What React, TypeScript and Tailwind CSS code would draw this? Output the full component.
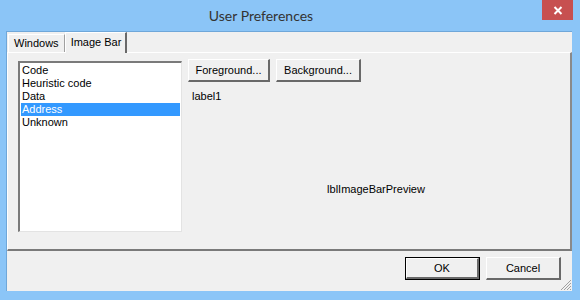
import React from 'react';

const items = ['Code', 'Heuristic code', 'Data', 'Address', 'Unknown'];

const ClassicButton: React.FC<{ label: string; width: string; isDefault?: boolean }> = ({ label, width, isDefault }) => {
  return (
    <div className={`${width} h-[23px] ${isDefault ? 'border border-black' : ''}`}>
      <div className="w-full h-full border-t border-l border-white border-r-2 border-b-2 border-r-[#696969] border-b-[#696969] bg-[#f0f0f0] flex items-center justify-center text-[11px] text-black whitespace-nowrap">
        {label}
      </div>
    </div>
  );
};

const App: React.FC = () => {
  return (
    <div className="w-[580px] h-[300px] bg-[#8bc5f7] flex flex-col" style={{ fontFamily: '"Liberation Sans", Arial, sans-serif' }}>
      {/* Title bar */}
      <div className="h-[31px] relative flex items-center justify-center">
        <span className="text-[14px] text-[#333] pr-[58px] pb-[1px]" style={{ fontFamily: 'Lato, "Noto Sans", sans-serif' }}>
          User Preferences
        </span>
        <div className="absolute top-0 right-[7px] w-[31px] h-[20px] bg-[#c75050] flex items-center justify-center">
          <svg width="10" height="9" viewBox="0 0 10 9">
            <path d="M1.5 1 L8.5 8 M8.5 1 L1.5 8" stroke="white" strokeWidth="2" />
          </svg>
        </div>
      </div>

      {/* Client area */}
      <div className="ml-[6px] mr-[8px] h-[260px] border-l border-t border-[#6fa7d9] bg-[#f0f0f0] flex flex-col">
        {/* Tab control */}
        <div className="h-[219px] flex flex-col">
          <div className="h-[20px] flex items-end relative z-10">
            <div className="ml-[1px] h-[18px] border-t border-l border-white border-r border-r-[#a0a0a0] flex items-center px-[5px] text-[11px] text-black whitespace-nowrap">
              Windows
            </div>
            <div className="h-[21px] -mb-[1px] border-t border-l border-white border-r-2 border-r-[#696969] bg-[#f0f0f0] flex items-center pl-[5px] pr-[4px] pb-[1px] text-[11px] text-black whitespace-nowrap">
              Image Bar
            </div>
          </div>
          <div className="flex-1 border-t border-l border-white border-r-2 border-b-2 border-r-[#8a8a8a] border-b-[#7a7a7a] flex">
            {/* List box */}
            <div className="ml-[10px] mt-[8px] w-[164px] h-[171px] border-t-2 border-l-2 border-t-[#7a7a7a] border-l-[#7a7a7a] border-r border-b border-r-[#e3e3e3] border-b-[#e3e3e3] bg-white pt-[1px] pl-[1px] pr-[1px]">
              {items.map((it) => (
                <div
                  key={it}
                  className={`h-[13px] leading-[13px] text-[11px] pl-[1px] whitespace-nowrap ${it === 'Address' ? 'bg-[#3399ff] text-white' : 'text-black'}`}
                >
                  {it}
                </div>
              ))}
            </div>
            {/* Right side */}
            <div className="ml-[6px] mt-[6px] flex-1 flex flex-col">
              <div className="flex gap-[6px]">
                <ClassicButton label="Foreground..." width="w-[82px]" />
                <ClassicButton label="Background..." width="w-[85px]" />
              </div>
              <div className="mt-[8px] ml-[4px] text-[11px] text-black leading-[13px]">label1</div>
              <div className="mt-[80px] text-center pr-[6px] text-[11px] text-black leading-[13px]">lblImageBarPreview</div>
            </div>
          </div>
        </div>

        {/* Bottom buttons */}
        <div className="flex-1 flex justify-end items-start pt-[6px] pr-[11px] gap-[6px] relative">
          <ClassicButton label="OK" width="w-[75px]" isDefault />
          <ClassicButton label="Cancel" width="w-[75px]" />
          <svg className="absolute right-0 bottom-0" width="12" height="12" viewBox="0 0 12 12">
            <g stroke="#a0a0a0" strokeWidth="1">
              <path d="M11 1 L1 11" />
              <path d="M11 4 L4 11" />
              <path d="M11 7 L7 11" />
              <path d="M11 10 L10 11" />
            </g>
          </svg>
        </div>
      </div>
    </div>
  );
};

export default App;
